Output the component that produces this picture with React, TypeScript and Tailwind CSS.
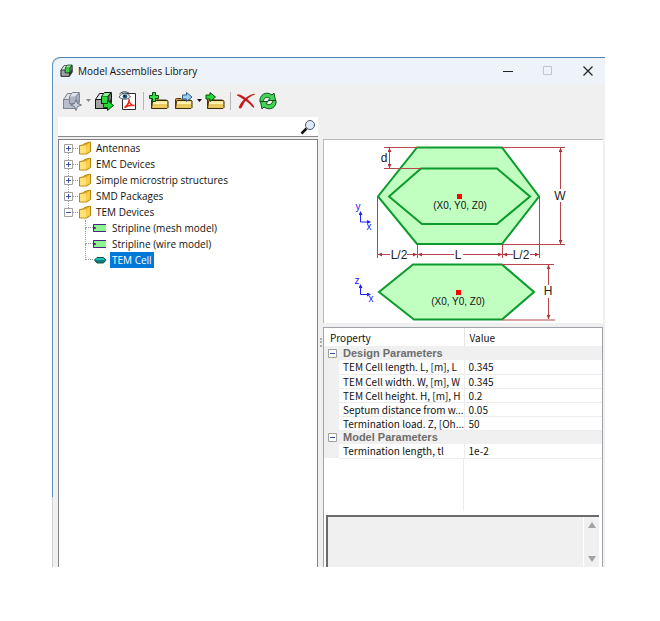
import React, { useState } from 'react';

interface Folder {
  name: string;
  items?: { name: string; kind: 'strip' | 'cell' }[];
}

const folders: Folder[] = [
  { name: 'Antennas' },
  { name: 'EMC Devices' },
  { name: 'Simple microstrip structures' },
  { name: 'SMD Packages' },
  {
    name: 'TEM Devices',
    items: [
      { name: 'Stripline (mesh model)', kind: 'strip' },
      { name: 'Stripline (wire model)', kind: 'strip' },
      { name: 'TEM Cell', kind: 'cell' },
    ],
  },
];

const groups = [
  {
    title: 'Design Parameters',
    rows: [
      ['TEM Cell length. L, [m], L', '0.345'],
      ['TEM Cell width. W, [m], W', '0.345'],
      ['TEM Cell height. H, [m], H', '0.2'],
      ['Septum distance from w...', '0.05'],
      ['Termination load. Z, [Oh...', '50'],
    ],
  },
  { title: 'Model Parameters', rows: [['Termination length, tl', '1e-2']] },
];

const Cube = ({ muted = false }: { muted?: boolean }) => (
  <g stroke={muted ? '#7c8496' : '#111'} strokeLinejoin="round">
    <path d="M1.500 8.500l4-6h12v9l-4 6h-12z" fill={muted ? '#aab1c1' : '#777'} />
    <path d="M2 8.500l4-5.500h3v5.500z" fill={muted ? '#dfe2e8' : '#e6e6e6'} stroke="none" />
    <path d="M1.500 8.500h6v4h6v5h-12z" fill={muted ? '#b9bfcc' : '#a3a3a3'} />
    <path d="M7.500 5.500l3-4h7l-3.500 4v7H7.500z" fill={muted ? '#c3c8d3' : '#129a22'} />
    <path d="M8 6h5.500v6H8z" fill={muted ? '#aeb5c4' : '#31d840'} stroke="none" />
    <path d="M8.500 5l2-3h5.500l-2.500 3z" fill={muted ? '#dfe2e8' : '#8cf593'} stroke="none" />
    <path d="M14 12l3.500-5v4.500l-4 6z" fill={muted ? '#9097a8' : '#333'} stroke="none" />
  </g>
);

const FolderShape = () => (
  <g strokeLinejoin="round">
    <path d="M2.500 17v-8.500q0-1 1-1h4.500l1.500 1.500h7.500q1 0 1 1v7z" fill="#c89f3a" stroke="#4a3800" />
    <path d="M2.500 17.500l1-7q0-1 1-1h13.500q1 0 1 1v6l-1 1z" fill="#ecc95f" stroke="#3a2b00" />
    <path d="M4.500 10.500h13.500v2.500H4z" fill="#fff1ae" />
  </g>
);

const icons: Record<string, React.ReactNode> = {
  add: (
    <>
      <Cube muted />
      <path d="M14 8.500l1.500 4 4 1.500-4 1.500-1.500 4-1.500-4-4-1.500 4-1.500z" fill="#cfd4df" stroke="#6f7789" />
    </>
  ),
  insert: (
    <>
      <Cube />
      <path d="M9.500 12.500h4V9.500l6 5-6 5v-3h-4z" fill="#25d935" stroke="#0a4a10" />
    </>
  ),
  pdf: (
    <>
      <path d="M4.500 2.500h13v16h-13z" fill="#fff" stroke="#2b2b2b" />
      <path d="M6.500 16.500c3.500-2.500 5-5.500 4.500-8.500 0 3.500 2 6.500 5.500 6.500-3.500-1-7 .5-10 2z" fill="none" stroke="#ec2a15" strokeWidth="1.500" />
      <path d="M1 6c3-5 8-5 11.500 0-3.500 3-8 3-11.500 0z" fill="#eef4f8" stroke="#46586a" />
      <path d="M1.500 3c3-3 7-3 10.500 0" fill="none" stroke="#2b3b4a" />
      <circle cx="7" cy="5.500" r="2.300" fill="#27597f" />
      <circle cx="6.500" cy="5" r="1" fill="#0a1c2c" />
    </>
  ),
  folderAdd: (
    <>
      <FolderShape />
      <path d="M3.500 1.500h3v3h3v3h-3v3h-3v-3h-3v-3h3z" fill="#35dd46" stroke="#0a4a10" />
    </>
  ),
  folderOut: (
    <>
      <FolderShape />
      <path d="M9.500 4h4v-2.500l5.500 4.500-5.500 4.500v-2.500h-4z" fill="#9fd0f5" stroke="#2c5a85" />
    </>
  ),
  folderIn: (
    <>
      <FolderShape />
      <path d="M1 4h4v-2.500l5.500 4.500-5.500 4.500v-2.500h-4z" fill="#25d935" stroke="#0a4a10" />
    </>
  ),
  remove: (
    <g fill="#d31515" stroke="#a80c0c" strokeWidth=".5">
      <path d="M1 4c2-.8 4 0 6 1.500 4 2.500 8 5 11 10.500l-1 .3C13 11 8 8.500 1 4z" />
      <path d="M18.500 3.500c-6 2-10 6-13 13-1 1-2 1-2.500 0C5.500 10 11 4.500 18.500 3z" />
    </g>
  ),
  refresh: (
    <g fill="#43d455" stroke="#0d4f1b" strokeLinejoin="round">
      <path d="M2 11C1 4 8-.5 14 4l2-2 1.500 7.500H10l2-2C9 5 5 7 5.500 11z" />
      <path d="M18 9.500c1 6.500-6 11-12 6.500l-2 2L2.500 10.500H10l-2 2c3 2.500 7 .5 6.500-3z" />
    </g>
  ),
};

const ToolButton = ({ name, label }: { name: string; label: string }) => (
  <button type="button" aria-label={label} className="shrink-0">
    <svg viewBox="0 0 20 20" className="size-5">{icons[name]}</svg>
  </button>
);

const DropArrow = ({ label, muted = false }: { label: string; muted?: boolean }) => (
  <button type="button" aria-label={label} className="flex h-5 w-3 shrink-0 items-center justify-center">
    <svg viewBox="0 0 5 3" className="h-[3px] w-[5px]">
      <path d="M0 0h5L2.500 3z" fill={muted ? '#888' : '#111'} />
    </svg>
  </button>
);

const Separator = () => <div className="mx-[5px] h-[18px] w-px bg-[#b5b5b5]" />;

const Expander = ({ open }: { open: boolean }) => (
  <svg viewBox="0 0 9 9" className="relative size-[9px] shrink-0">
    <path d="M.5.5h8v8h-8z" fill="#fff" stroke="#a0a0a0" />
    <path d={open ? 'M2 4.500h5' : 'M2 4.500h5M4.500 2v5'} stroke="#3a55a8" />
  </svg>
);

const TreeFolderIcon = () => (
  <svg viewBox="0 0 14 14" className="size-[14px] shrink-0">
    <path d="M1.500 4.500l3.500-.5 1.500-1.500 6-1.500v9.500l-4 2.500h-7z" fill="#e0a91c" stroke="#b58614" />
    <path d="M2 5l6-.5v8H2z" fill="#ffe27a" />
    <path d="M8 4.500l4-3v8.500l-4 2.500z" fill="#f9cf4a" />
  </svg>
);

const ItemIcon = ({ kind }: { kind: 'strip' | 'cell' }) => (
  <svg viewBox="0 0 14 10" className="h-[10px] w-[14px] shrink-0">
    {kind === 'strip' ? (
      <>
        <path d="M0 1h13v8H0z" fill="#8df58d" />
        <path d="M13 1.500H.5v7H13" fill="none" stroke="#4a2480" />
        <path d="M1 4.500h1.500v1H1" fill="none" stroke="#4a2480" />
      </>
    ) : (
      <>
        <path d="M1.500 5L4 2.500h6.500L13 5l-2.500 3H4z" fill="#0b7f7c" stroke="#145050" />
        <path d="M4 3h6.500l1.500 2H2.500z" fill="#14c4ba" />
      </>
    )}
  </svg>
);

const dimArrows = [
  'M236.500 49V8',
  'M236.500 62v42',
  'M224.500 145v-20',
  'M224.500 158v21',
  'M66 114.500H54',
  'M83 114.500h10',
  'M130 114.500H94',
  'M139 114.500h39',
  'M189 114.500h-10',
  'M206 114.500h9',
];

const Diagram = () => (
  <svg viewBox="0 0 278 183" className="block h-[183px] w-[278px] font-['Liberation_Sans',sans-serif]" role="img" aria-label="TEM Cell dimensions">
    <defs>
      <marker id="arrow" viewBox="0 0 4 4" refX="4" refY="2" markerWidth="4" markerHeight="4" orient="auto-start-reverse">
        <path d="M0 0l4 2-4 2z" fill="#b03038" />
      </marker>
      <marker id="axis" viewBox="0 0 4 4" refX="3" refY="2" markerWidth="4" markerHeight="4" orient="auto-start-reverse">
        <path d="M0 0l4 2-4 2z" fill="#2020ff" />
      </marker>
    </defs>
    <g fill="#c1ffc1" stroke="#0c9a2c" strokeWidth="2">
      <path d="M93 7.500h85l37 49-37 47.500H93L54 56.500z" />
      <path d="M97 28.500h76l33 28-33 27.500H98L65 56.500z" />
      <path d="M89 124.500h89l32 27.500-32 27.500H90L55 152z" />
    </g>
    <g stroke="#b8474d" fill="none">
      <path d="M60 7.500h33M60 28.500h37M178 7.500h63M178 104.500h63M178 124.500h52M178 180h53" />
      <path d="M53.500 57v61M93.500 105v13M178.500 105v13M215.500 57v61" />
      <path d="M65.500 8v20" markerStart="url(#arrow)" markerEnd="url(#arrow)" />
      {dimArrows.map((d) => (
        <path key={d} d={d} markerEnd="url(#arrow)" />
      ))}
    </g>
    <g fill="none" stroke="#2020ff">
      <path d="M36.500 72v10H46" markerStart="url(#axis)" markerEnd="url(#axis)" />
      <path d="M36.500 145v9.500H46" markerStart="url(#axis)" markerEnd="url(#axis)" />
    </g>
    <path d="M133 54h5v5h-5zM132 150h5v5h-5z" fill="#f00" />
    <g fill="#222" fontSize="12" textAnchor="middle">
      <text x="60" y="22">d</text>
      <text x="236" y="60">W</text>
      <text x="224" y="155">H</text>
      <text x="75" y="119">L/2</text>
      <text x="134" y="119">L</text>
      <text x="197" y="119">L/2</text>
    </g>
    <g fill="#111" fontSize="10" textAnchor="middle">
      <text x="136" y="69">(X0, Y0, Z0)</text>
      <text x="134" y="165">(X0, Y0, Z0)</text>
    </g>
    <g fill="#2020ff" fontSize="10" textAnchor="middle">
      <text x="34" y="70">y</text>
      <text x="45" y="90">x</text>
      <text x="33" y="144">z</text>
      <text x="47" y="162">x</text>
    </g>
  </svg>
);

const TitleBar = () => (
  <header className="flex h-[27px] items-center rounded-tl-lg border-t border-[#4d82b0] bg-[#eef3f9] pr-3 pl-[7px]">
    <svg viewBox="0 0 20 20" className="mr-1 size-[14px]"><Cube /></svg>
    <h1 className="flex-1 text-[10px] text-[#111]">Model Assemblies Library</h1>
    <div className="flex gap-[30px]">
      <button type="button" aria-label="Minimize">
        <svg viewBox="0 0 10 10" className="size-[10px]"><path d="M0 5.500h10" stroke="#222" /></svg>
      </button>
      <button type="button" aria-label="Maximize" disabled>
        <svg viewBox="0 0 10 10" className="size-[10px]"><path d="M.5.500h8v8h-8z" fill="none" stroke="#c2c5c9" /></svg>
      </button>
      <button type="button" aria-label="Close">
        <svg viewBox="0 0 10 10" className="size-[10px]"><path d="M.5.5l9 9M9.500.5l-9 9" stroke="#222" strokeWidth="1.200" /></svg>
      </button>
    </div>
  </header>
);

const Toolbar = () => (
  <div role="toolbar" className="flex h-[33px] items-center pl-[9px]">
    <ToolButton name="add" label="Add to model" />
    <DropArrow label="Add options" muted />
    <div className="flex gap-1">
      <ToolButton name="insert" label="Insert assembly" />
      <ToolButton name="pdf" label="View documentation" />
    </div>
    <Separator />
    <div className="flex gap-1">
      <ToolButton name="folderAdd" label="New folder" />
      <ToolButton name="folderOut" label="Export" />
    </div>
    <DropArrow label="Export options" />
    <ToolButton name="folderIn" label="Import" />
    <Separator />
    <div className="flex gap-[2px]">
      <ToolButton name="remove" label="Delete" />
      <ToolButton name="refresh" label="Refresh" />
    </div>
  </div>
);

const Tree = () => {
  const [selected, setSelected] = useState('TEM Cell');

  return (
    <ul className="pl-[5px] text-[10px] leading-4 text-[#111]">
      {folders.map((folder, i) => (
        <li key={folder.name} className="relative">
          {i < folders.length - 1 && <span className="absolute top-2 left-1 h-4 border-l border-dotted border-[#999]" />}
          <div className="flex h-4 items-center">
            <Expander open={!!folder.items} />
            <span className="w-[5px] border-t border-dotted border-[#999]" />
            <TreeFolderIcon />
            <span className="pl-1">{folder.name}</span>
          </div>
          {folder.items && (
            <ul className="pl-[21px]">
              {folder.items.map((item, n) => (
                <li key={item.name} className="flex h-4 items-center">
                  <span className={`w-2 self-start border-b border-l border-dotted border-[#999] ${n === 0 ? 'h-2' : '-mt-2 h-4'}`} />
                  <ItemIcon kind={item.kind} />
                  <button
                    type="button"
                    onClick={() => setSelected(item.name)}
                    className={`ml-[3px] px-[2px] ${selected === item.name ? 'bg-[#0078d7] text-white' : ''}`}
                  >
                    {item.name}
                  </button>
                </li>
              ))}
            </ul>
          )}
        </li>
      ))}
    </ul>
  );
};

const PropertyTable = () => (
  <table className="w-full table-fixed border-collapse text-left font-['Noto_Sans_CJK_JP',sans-serif] text-[10px] leading-[13px] text-[#111]">
    <colgroup>
      <col className="w-[15px]" />
      <col className="w-[125px]" />
      <col />
    </colgroup>
    <thead>
      <tr className="h-[18px]">
        <th colSpan={2} className="border-r border-[#e5e5e5] p-0 pl-[6px] font-normal">Property</th>
        <th className="p-0 pl-[5px] font-normal">Value</th>
      </tr>
    </thead>
    {groups.map((group) => (
      <tbody key={group.title}>
        <tr className="h-[14px] bg-[#f0f0f0]">
          <td className="p-0 pl-1"><Expander open /></td>
          <th colSpan={2} scope="rowgroup" className="p-0 pl-1 font-['Liberation_Sans',sans-serif] text-[11px] font-bold text-[#6d6d6d]">{group.title}</th>
        </tr>
        {group.rows.map(([label, value]) => (
          <tr key={label} className="h-[14px]">
            <td className="bg-[#f0f0f0] p-0" />
            <td className="border-r border-b border-[#ececec] p-0 pl-1 whitespace-nowrap">{label}</td>
            <td className="border-b border-[#ececec] p-0 pl-1">{value}</td>
          </tr>
        ))}
      </tbody>
    ))}
  </table>
);

const ScrollArrow = ({ up = false }: { up?: boolean }) => (
  <button type="button" aria-label={up ? 'Scroll up' : 'Scroll down'} className="flex h-4 items-center justify-center">
    <svg viewBox="0 0 8 6" className="h-[6px] w-2">
      <path d={up ? 'M0 6h8L4 0z' : 'M0 0h8L4 6z'} fill="#a3a3a3" />
    </svg>
  </button>
);

const App: React.FC = () => (
  <div className="flex min-h-screen flex-col bg-white pt-[57px] pr-[55px] pb-[54px] pl-[52px] font-['Open_Sans',sans-serif]">
    <main className="relative flex flex-1 flex-col rounded-tl-lg border-l border-[#5b93c2] bg-[#f0f0f0]">
      {/* lower part of the frame is grey */}
      <span className="absolute bottom-0 -left-px h-[70px] w-px bg-[#cfcfcf]" />
      <TitleBar />
      <Toolbar />
      <div className="flex flex-1 pr-[2px] pl-[5px]">
        <div className="flex w-[260px] shrink-0 flex-col">
          <div className="flex h-5 items-center border-b border-[#888] bg-white pr-[2px]">
            <input aria-label="Search" className="h-full min-w-0 flex-1 px-1 text-[10px] outline-none" />
            <button type="button" aria-label="Find">
              <svg viewBox="0 0 16 16" className="size-4">
                <path d="M1.500 14.500l5-5" stroke="#111" strokeWidth="2.500" />
                <circle cx="10" cy="6" r="4.500" fill="#dcebfa" stroke="#4a5568" />
              </svg>
            </button>
          </div>
          <div className="mt-[2px] flex-1 border-x border-t border-[#828282] bg-white">
            <Tree />
          </div>
        </div>
        <div className="flex w-[5px] flex-col items-center justify-center">
          <span className="h-[9px] border-l-2 border-dotted border-[#aaa]" />
        </div>
        <div className="flex min-w-0 flex-1 flex-col pt-[22px]">
          <div className="border-t border-l border-[#bbb] bg-white">
            <Diagram />
          </div>
          <div className="mt-1 flex flex-1 flex-col border-x border-t border-[#a0a4aa] bg-white">
            <PropertyTable />
            <div className="ml-[139px] flex-1 border-l border-[#ececec]" />
            <div className="mt-1 mr-[3px] ml-[2px] flex h-[52px] border-t-2 border-l-2 border-[#6b6b6b] bg-[#f0f0f0]">
              <textarea aria-label="Description" readOnly className="min-w-0 flex-1 resize-none outline-none" />
              <div className="flex w-4 flex-col justify-between border-l border-white">
                <ScrollArrow up />
                <ScrollArrow />
              </div>
            </div>
          </div>
        </div>
      </div>
    </main>
  </div>
);

export default App;
